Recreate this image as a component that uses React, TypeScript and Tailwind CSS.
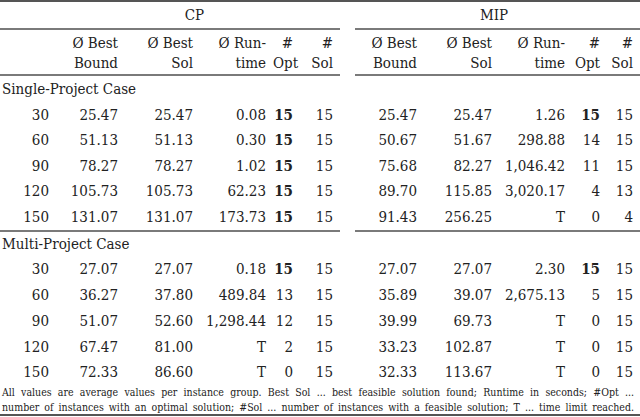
import React from 'react';

type Cell = string | { v: string; b: true };

const single: Cell[][] = [
  ['30', '25.47', '25.47', '0.08', { v: '15', b: true }, '15', '25.47', '25.47', '1.26', { v: '15', b: true }, '15'],
  ['60', '51.13', '51.13', '0.30', { v: '15', b: true }, '15', '50.67', '51.67', '298.88', '14', '15'],
  ['90', '78.27', '78.27', '1.02', { v: '15', b: true }, '15', '75.68', '82.27', '1,046.42', '11', '15'],
  ['120', '105.73', '105.73', '62.23', { v: '15', b: true }, '15', '89.70', '115.85', '3,020.17', '4', '13'],
  ['150', '131.07', '131.07', '173.73', { v: '15', b: true }, '15', '91.43', '256.25', 'T', '0', '4'],
];

const multi: Cell[][] = [
  ['30', '27.07', '27.07', '0.18', { v: '15', b: true }, '15', '27.07', '27.07', '2.30', { v: '15', b: true }, '15'],
  ['60', '36.27', '37.80', '489.84', '13', '15', '35.89', '39.07', '2,675.13', '5', '15'],
  ['90', '51.07', '52.60', '1,298.44', '12', '15', '39.99', '69.73', 'T', '0', '15'],
  ['120', '67.47', '81.00', 'T', '2', '15', '33.23', '102.87', 'T', '0', '15'],
  ['150', '72.33', '86.60', 'T', '0', '15', '32.33', '113.67', 'T', '0', '15'],
];

const headers = [
  ['Ø Best', 'Bound'],
  ['Ø Best', 'Sol'],
  ['Ø Run-', 'time'],
  ['#', 'Opt'],
  ['#', 'Sol'],
];

// rule split at the CP / MIP gap
const SplitRule = () => (
  <>
    <div className="col-span-6 h-[2px] bg-[#7a7a7a]" />
    <div />
    <div className="col-span-5 h-[2px] bg-[#7a7a7a]" />
  </>
);

const DataRow = ({ row, h }: { row: Cell[]; h: string }) => {
  const cells = [...row.slice(0, 6), null, ...row.slice(6)];
  return (
    <>
      {cells.map((c, i) => {
        if (c === null) return <div key={i} />;
        const bold = typeof c !== 'string';
        const text = typeof c === 'string' ? c : c.v;
        return (
          <div key={i} className={`${h} flex items-center justify-end pr-[7px] whitespace-nowrap ${bold ? 'font-bold' : ''}`}>
            {text}
          </div>
        );
      })}
    </>
  );
};

export default function App() {
  return (
    <div
      className="w-[640px] h-[417px] bg-white text-[#222] text-[15px] leading-[20px] overflow-hidden [font-stretch:condensed]"
      style={{ fontFamily: '"DejaVu Serif Condensed", "DejaVu Serif", serif' }}
    >
      <div className="h-[2px] bg-[#555]" />
      <div className="grid grid-cols-[56px_69px_75px_73px_27px_40px_15px_69px_75px_73px_35px_33px]">
        {/* group header */}
        <div className="h-[26px]" />
        <div className="col-span-5 h-[26px] flex items-center justify-center pr-[7px]">CP</div>
        <div />
        <div className="col-span-5 h-[26px] flex items-center justify-center pr-[7px]">MIP</div>
        <SplitRule />

        {/* column headers */}
        <div className="h-[44px]" />
        {headers.map(([a, b], i) => (
          <div key={'c' + i} className="h-[44px] pt-[3px] pr-[7px] text-right whitespace-nowrap">
            <div>{a}</div>
            <div>{b}</div>
          </div>
        ))}
        <div />
        {headers.map(([a, b], i) => (
          <div key={'m' + i} className="h-[44px] pt-[3px] pr-[7px] text-right whitespace-nowrap">
            <div>{a}</div>
            <div>{b}</div>
          </div>
        ))}
        <SplitRule />

        <div className="col-span-12 h-[26px] flex items-center pl-[2px]">Single-Project Case</div>
        {single.map((r, i) => (
          <DataRow key={'s' + i} row={r} h="h-[25.5px]" />
        ))}
        <SplitRule />

        <div className="col-span-12 h-[25px] flex items-center pl-[2px]">Multi-Project Case</div>
        {multi.map((r, i) => (
          <DataRow key={'u' + i} row={r} h="h-[25.75px]" />
        ))}
      </div>

      <div className="pl-[2px] pr-[6px] text-[10.5px] leading-[14.5px] text-justify [text-align-last:justify]">
        <div>
          All values are average values per instance group. Best Sol ... best feasible solution found; Runtime in seconds; #Opt ...
        </div>
        <div>
          number of instances with an optimal solution; #Sol ... number of instances with a feasible solution; T ... time limit reached.
        </div>
      </div>
      <div className="h-[2px] bg-[#555]" />
    </div>
  );
}
